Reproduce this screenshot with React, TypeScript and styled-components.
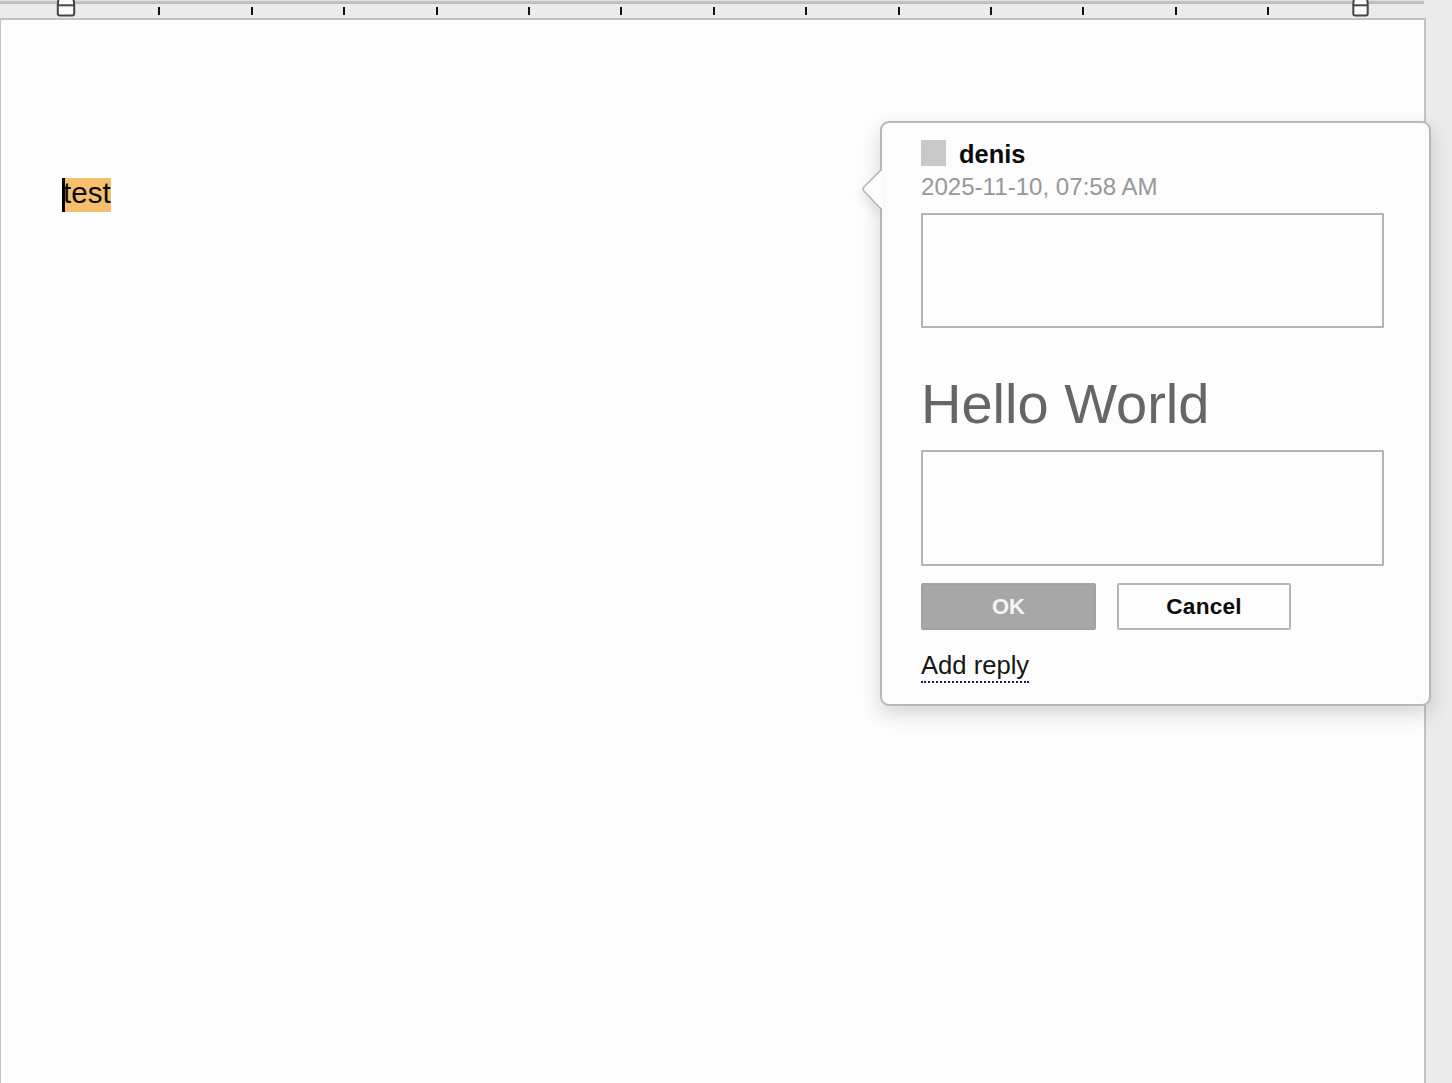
import React from "react";
import styled, { createGlobalStyle } from "styled-components";

const Global = createGlobalStyle`
  * { box-sizing: border-box; }
  body { margin: 0; background: #ebebeb; font-family: "Liberation Sans", Arial, sans-serif; overflow: hidden; }
`;

const Editor = styled.div`
  position: relative;
  display: flex;
  flex-direction: column;
  height: 1083px;
  background: #ebebeb;
`;

const Ruler = styled.div`
  display: flex;
  align-items: flex-start;
  height: 18px;
  width: 1424px;
  padding-left: 56px;
  background: linear-gradient(#dfdfdf 0 1px, #c4c4c4 1px 2px, #bdbdbd 2px 4px, #ebebeb 4px);
`;

const Ticks = styled.div`
  display: flex;
  justify-content: space-between;
  width: 1111px;
  margin: 7px 83px 0 82.3px;
`;

const Tick = styled.span`
  width: 2px;
  height: 8px;
  background: #111;
`;

const Page = styled.main`
  flex: 1;
  width: 1426px;
  padding: 158px 0 0 61px;
  background: #fdfdfd;
  border: solid #c2c2c2;
  border-width: 2px 2px 0 1px;
`;

const Highlight = styled.span`
  display: inline-block;
  width: 49px;
  height: 34px;
  border-left: 3px solid #000;
  background: #f6bf6b;
  font-size: 29.6px;
  line-height: 30px;
  white-space: nowrap;
  color: #0c0c0c;
`;

const Word = styled.span`
  margin-left: -2px;
`;

const Popover = styled.aside`
  position: absolute;
  left: 880px;
  top: 121px;
  display: flex;
  flex-direction: column;
  align-items: flex-start;
  width: 551px;
  height: 585px;
  padding: 17px 39px 0;
  background: #fdfdfd;
  border: 2px solid #b8b8b8;
  border-radius: 9px;
  box-shadow: 0 8px 20px rgba(0, 0, 0, 0.16);
`;

const Arrow = styled.svg`
  position: absolute;
  left: -20px;
  top: 44px;
  filter: drop-shadow(-3px 5px 4px rgba(0, 0, 0, 0.08));
`;

const Author = styled.header`
  display: flex;
  align-items: center;
  gap: 13px;
  height: 28px;
  font-size: 25.4px;
  font-weight: 700;
  line-height: 30px;
  color: #0c0c0c;
`;

const Avatar = styled.span`
  width: 25px;
  height: 26px;
  margin-top: -3px;
  background: #c9c9c9;
`;

const Stamp = styled.time`
  margin-top: 5px;
  font-size: 24.1px;
  line-height: 28px;
  color: #989898;
`;

const Field = styled.textarea<{ $top: number; $height: number }>`
  display: block;
  width: 463px;
  height: ${(p) => p.$height}px;
  margin: ${(p) => p.$top}px 0 0;
  border: 2px solid #b3b3b3;
  border-radius: 1px;
  background: #fdfdfd;
  resize: none;
  outline: none;
`;

const Greeting = styled.h1`
  margin: 44px 0 0;
  font-size: 56px;
  font-weight: 400;
  line-height: 64px;
  color: #666668;
`;

const Actions = styled.div`
  display: flex;
  gap: 21px;
  margin-top: 17px;
`;

const Button = styled.button<{ $primary?: boolean }>`
  width: ${(p) => (p.$primary ? 175 : 174)}px;
  height: 47px;
  padding: 0;
  border: 2px solid ${(p) => (p.$primary ? "#a1a1a1" : "#b5b5b5")};
  border-radius: 2px;
  background: ${(p) => (p.$primary ? "#a7a7a7" : "#fdfdfd")};
  color: ${(p) => (p.$primary ? "#f5f5f5" : "#0c0c0c")};
  font: 700 22px "Liberation Sans", Arial, sans-serif;
  font-size: ${(p) => (p.$primary ? 22 : 22.6)}px;
  letter-spacing: ${(p) => (p.$primary ? 0 : 0.2)}px;
`;

const ReplyLink = styled.a`
  height: 34px;
  margin-top: 19px;
  border-bottom: 2px dotted #1c1860;
  font-size: 25.6px;
  line-height: 33px;
  color: #161616;
`;

const Marker = () => (
  <svg width="20" height="18" viewBox="0 0 20 18" fill="#fafafa" stroke="#454545" strokeWidth="2">
    <path d="M2.5 -1L1.8 4V13.5Q1.8 15.5 3.8 15.5H16.2Q18.2 15.5 18.2 13.5V4L17.5 -1" />
    <path d="M2 5.3H18" />
  </svg>
);

const RightMarker = () => (
  <svg width="17" height="18" viewBox="0 0 17 18" fill="#fafafa" stroke="#454545" strokeWidth="2">
    <path d="M1.8 -1L1.3 4V13.5Q1.3 15.5 3.3 15.5H13.7Q15.7 15.5 15.7 13.5V4L15.2 -1" />
    <path d="M1.5 5.3H15.5" />
  </svg>
);

export default function App() {
  return (
    <>
      <Global />
      <Editor>
        <Ruler>
          <Marker />
          <Ticks>
            {Array.from({ length: 13 }, (_, i) => (
              <Tick key={i} />
            ))}
          </Ticks>
          <RightMarker />
        </Ruler>
        <Page>
          <Highlight>
            <Word>test</Word>
          </Highlight>
        </Page>
        <Popover>
          <Arrow width="22" height="46" viewBox="0 0 22 46">
            <path d="M21 2L2 20Q0 22 2 24L21 43Z" fill="#fdfdfd" />
            <path d="M19.5 2.5L2 20Q0.5 22 2 24L19.5 42.5" fill="none" stroke="#b5b5b5" strokeWidth="1.5" />
          </Arrow>
          <Author>
            <Avatar />
            denis
          </Author>
          <Stamp>2025-11-10, 07:58 AM</Stamp>
          <Field $top={12} $height={115} aria-label="Comment" />
          <Greeting>Hello World</Greeting>
          <Field $top={14} $height={116} aria-label="Reply" />
          <Actions>
            <Button $primary>OK</Button>
            <Button>Cancel</Button>
          </Actions>
          <ReplyLink>Add reply</ReplyLink>
        </Popover>
      </Editor>
    </>
  );
}
